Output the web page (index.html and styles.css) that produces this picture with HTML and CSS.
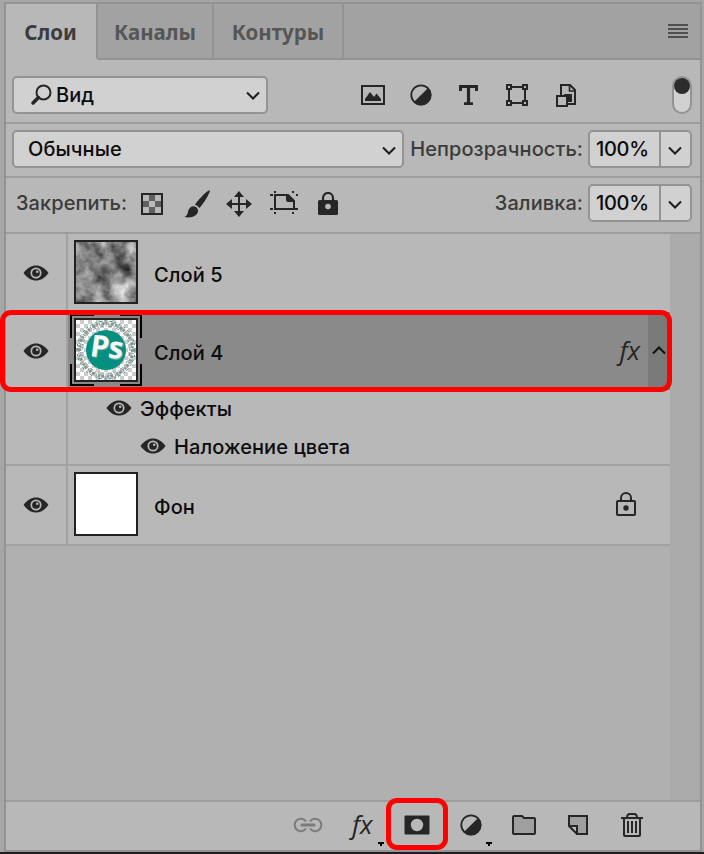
FILE: index.html
```html
<!DOCTYPE html>
<html lang="ru">
<head>
    <meta charset="UTF-8">
    <meta name="viewport" content="width=device-width, initial-scale=1.0">
    <title>Слои</title>
    <link rel="stylesheet" href="styles.css">
</head>
<body>
    <svg class="defs" width="0" height="0">
        <symbol id="eye" viewBox="0 0 26 16">
            <path d="M0.500 8C4 3 8.500 0.500 13 0.500S22 3 25.500 8C22 13 17.500 15.500 13 15.500S4 13 0.500 8Z" fill="#262626"/>
            <circle cx="13" cy="8" r="4.700" fill="none" stroke="#b8b8b8" stroke-width="1.700"/>
            <circle cx="14.200" cy="6.700" r="1.300" fill="#b8b8b8"/>
        </symbol>
        <symbol id="arrow" viewBox="0 0 14 9">
            <path d="M1 1.500l6 6 6-6" fill="none" stroke="#1c1c1c" stroke-width="2"/>
        </symbol>
        <symbol id="contrast" viewBox="0 0 22 22">
            <circle cx="11" cy="11" r="9.700" fill="none" stroke="#262626" stroke-width="1.800"/>
            <path d="M18.300 3.700A10.300 10.300 0 0 1 3.700 18.300Z" fill="#262626"/>
        </symbol>
    </svg>

    <div class="panel">
        <div class="tabs">
            <div class="tab active">Слои</div>
            <div class="tab">Каналы</div>
            <div class="tab">Контуры</div>
            <div class="menu"></div>
        </div>

        <div class="row filter-row">
            <div class="select kind">
                <svg width="22" height="22" viewBox="0 0 22 22" fill="none" stroke="#262626">
                    <circle cx="13.500" cy="8.500" r="7" stroke-width="2"/>
                    <path d="M8.500 13.500L3 19" stroke-width="3.500" stroke-linecap="round"/>
                </svg>
                <span>Вид</span>
                <svg class="arrow" width="14" height="9"><use href="#arrow"/></svg>
            </div>
            <div class="filters">
                <svg width="24" height="20" viewBox="0 0 24 20">
                    <rect x="1" y="1" width="22" height="18" fill="none" stroke="#262626" stroke-width="2"/>
                    <path d="M4 16v-2l5-7 4 5 2.500-3.500L20 14v2Z" fill="#262626"/>
                </svg>
                <svg class="adjust-filter" width="22" height="22"><use href="#contrast"/></svg>
                <svg width="20" height="20" viewBox="0 0 20 20" fill="none" stroke="#262626">
                    <path d="M1.500 6V1.500H17.500V6M5 18.700H14" stroke-width="3"/>
                    <path d="M9.500 1V19" stroke-width="3.200"/>
                </svg>
                <svg width="22" height="22" viewBox="0 0 22 22" fill="none" stroke="#262626" stroke-width="2">
                    <path d="M6 3H16M19 6V16M16 19H6M3 16V6"/>
                    <path d="M1 1h4v4H1zM17 1h4v4h-4zM1 17h4v4H1zM17 17h4v4h-4z"/>
                </svg>
                <svg class="smart-filter" width="20" height="23" viewBox="0 0 20 23" fill="none" stroke="#262626" stroke-width="2">
                    <path d="M5 12V1H14L19 6V20H12"/>
                    <path d="M13.500 1V7H19" stroke-width="1.600"/>
                    <path d="M8 10H16V18H12V12H8Z" fill="#262626" stroke="none"/>
                    <rect x="1" y="12" width="10" height="10"/>
                </svg>
            </div>
            <div class="toggle"></div>
        </div>

        <div class="row">
            <div class="select mode">
                <span>Обычные</span>
                <svg class="arrow" width="14" height="9"><use href="#arrow"/></svg>
            </div>
            <div class="label opacity">Непрозрачность:</div>
            <div class="select percent">
                <span>100%</span>
                <div class="drop"><svg width="14" height="9"><use href="#arrow"/></svg></div>
            </div>
        </div>

        <div class="row lock-row">
            <div class="label lock">Закрепить:</div>
            <div class="locks">
                <svg width="22" height="22" viewBox="0 0 22 22">
                    <rect x="1" y="1" width="20" height="20" fill="#b8b8b8" stroke="#262626" stroke-width="2"/>
                    <path d="M8 2h6v6H8zM2 8h6v6H2zM14 8h6v6h-6zM8 14h6v6H8z" fill="#606060"/>
                </svg>
                <svg class="brush" width="26" height="28" viewBox="0 0 26 28" fill="#262626">
                    <path d="M0.500 27C4 25 3.500 23 4.500 20C6 16 10.500 15 13 18C15.500 21.500 13 25.500 9 26.700C6 27.700 3 27.500 0.500 27Z"/>
                    <path d="M11 14.500C15 9.500 20 3.500 25.200 0.300Q26.200 0.300 25.700 1.800C23.500 7.500 19.500 13.500 15.500 18Q13.500 15.500 11 14.500Z"/>
                </svg>
                <svg class="move" width="26" height="26" viewBox="0 0 26 26">
                    <path d="M13 4V22M4 13H22" stroke="#262626" stroke-width="2"/>
                    <path d="M13 0l5 6H8zM13 26l5-6H8zM0 13l6-5v10zM26 13l-6-5v10z" fill="#262626"/>
                </svg>
                <svg class="artboard" width="28" height="24" viewBox="0 0 28 24">
                    <path d="M5 4H18L24 10V18H5Z" fill="none" stroke="#262626" stroke-width="2"/>
                    <path d="M16 3H18L25 10V11H18Q16 11 16 9Z" fill="#262626"/>
                    <path d="M4 0h2v2H4zM22 0h2v2h-2zM0 3h3v2H0zM26 3h2v2h-2zM0 17h3v2H0zM25 17h3v2h-3zM4 21h2v2H4zM22 21h2v2h-2z" fill="#262626"/>
                </svg>
                <svg class="padlock" width="20" height="24" viewBox="0 0 20 24">
                    <path d="M5 9V6a5 5 0 0 1 10 0V9" fill="none" stroke="#262626" stroke-width="2.200"/>
                    <rect y="8" width="20" height="15" rx="1.500" fill="#262626"/>
                    <circle cx="10" cy="14.500" r="2.800" fill="#b8b8b8"/>
                </svg>
            </div>
            <div class="label">Заливка:</div>
            <div class="select percent">
                <span>100%</span>
                <div class="drop"><svg width="14" height="9"><use href="#arrow"/></svg></div>
            </div>
        </div>

        <div class="content">
            <div class="layers">
                <div class="layer first">
                    <div class="visible"><svg width="26" height="16"><use href="#eye"/></svg></div>
                    <div class="thumb">
                        <svg width="60" height="60">
                            <filter id="clouds" x="0" y="0" width="100%" height="100%" color-interpolation-filters="sRGB">
                                <feTurbulence type="fractalNoise" baseFrequency="0.055" numOctaves="5" seed="21"/>
                                <feColorMatrix values="1.100 0 0 0 -0.020  1.100 0 0 0 -0.020  1.100 0 0 0 -0.020  0 0 0 0 1"/>
                            </filter>
                            <rect width="60" height="60" filter="url(#clouds)"/>
                        </svg>
                    </div>
                    <div class="name">Слой 5</div>
                </div>

                <div class="layer selected">
                    <div class="visible"><svg width="26" height="16"><use href="#eye"/></svg></div>
                    <div class="frame">
                        <svg class="corners" width="72" height="72" viewBox="0 0 72 72">
                            <path d="M1 24V1H24M50 1H71V24M71 50V71H50M24 71H1V50" fill="none" stroke="#000" stroke-width="2"/>
                        </svg>
                        <div class="thumb">
                            <svg width="60" height="60" viewBox="0 0 60 60">
                                <pattern id="checks" width="8" height="8" patternUnits="userSpaceOnUse">
                                    <path d="M0 0h8v8H0z" fill="#fff"/>
                                    <path d="M4 0h4v4H4zM0 4h4v4H0z" fill="#ccc"/>
                                </pattern>
                                <rect width="60" height="60" fill="url(#checks)"/>
                                <g fill="none">
                                    <circle cx="30" cy="30" r="26.500" stroke="#8d9190" stroke-width="3" stroke-dasharray="2 1 1 1.500 3 1"/>
                                    <circle cx="30" cy="30" r="29" stroke="#138f80" stroke-dasharray="3 2 2 3"/>
                                    <circle cx="30" cy="30" r="24" stroke="#579b92" stroke-dasharray="1 2 3 2"/>
                                </g>
                                <circle cx="30" cy="30" r="20" fill="#048f7f"/>
                                <g transform="rotate(5 30 30) skewX(-3)">
                                    <text class="ps shade" x="16.500" y="38.500">Ps</text>
                                    <text class="ps" x="15.500" y="37.500">Ps</text>
                                </g>
                            </svg>
                        </div>
                    </div>
                    <div class="name">Слой 4</div>
                    <div class="fx">fx</div>
                    <div class="collapse">
                        <svg width="14" height="9" viewBox="0 0 14 9"><path d="M1 7.500l6-6 6 6" fill="none" stroke="#111" stroke-width="2"/></svg>
                    </div>
                </div>

                <div class="layer effects">
                    <div class="visible"></div>
                    <div class="effect-list">
                        <div class="effect"><svg width="26" height="16"><use href="#eye"/></svg><span>Эффекты</span></div>
                        <div class="effect child"><svg width="26" height="16"><use href="#eye"/></svg><span>Наложение цвета</span></div>
                    </div>
                </div>

                <div class="layer background">
                    <div class="visible"><svg width="26" height="16"><use href="#eye"/></svg></div>
                    <div class="thumb"></div>
                    <div class="name">Фон</div>
                    <svg class="locked" width="20" height="24" viewBox="0 0 20 24">
                        <path d="M5 9V6a5 5 0 0 1 10 0V9" fill="none" stroke="#262626" stroke-width="2"/>
                        <rect x="1" y="9" width="18" height="14" rx="1" fill="none" stroke="#262626" stroke-width="2"/>
                        <circle cx="10" cy="16" r="2.700" fill="#262626"/>
                    </svg>
                </div>
            </div>
            <div class="scroll"></div>
        </div>

        <div class="footer">
            <svg class="link" width="30" height="16" viewBox="0 0 30 16" fill="none" stroke="#7b7b7b" stroke-width="2">
                <path d="M13 4.500A6.200 6.200 0 1 0 13 11.500M17 4.500A6.200 6.200 0 1 1 17 11.500"/>
                <path d="M9 8H21" stroke-width="3" stroke-linecap="round"/>
            </svg>
            <div class="fx footer-fx">fx</div>
            <svg class="mini" width="6" height="4"><path d="M0 0h6v2H4v2H2V2H0z"/></svg>
            <svg class="mask" width="26" height="20" viewBox="0 0 26 20">
                <rect x="0.500" y="0.500" width="25" height="19" rx="1" fill="#262626"/>
                <circle cx="13" cy="10" r="6.200" fill="#b8b8b8"/>
            </svg>
            <svg class="adjust" width="22" height="22"><use href="#contrast"/></svg>
            <svg class="mini" width="6" height="4"><path d="M0 0h6v2H4v2H2V2H0z"/></svg>
            <svg class="folder" width="24" height="20" viewBox="0 0 24 20">
                <path d="M1 18V2Q1 1 2 1H10L12 3H22Q23 3 23 4V18Q23 19 22 19H2Q1 19 1 18Z" fill="#9f9f9f" stroke="#262626" stroke-width="2"/>
            </svg>
            <svg class="new" width="20" height="20" viewBox="0 0 20 20">
                <path d="M1 11V1H19V19H9Z" fill="#9f9f9f"/>
                <path d="M1 12L8 19V12Z" fill="#b8b8b8"/>
                <path d="M1 11V1H19V19H9V11H1L9 19" fill="none" stroke="#262626" stroke-width="2"/>
            </svg>
            <svg width="22" height="24" viewBox="0 0 22 24" fill="none" stroke="#262626" stroke-width="2">
                <path d="M0 5H22M6 5Q6 1 9 1H13Q16 1 16 5M3 5V22Q3 23 4 23H18Q19 23 19 22V5M7 8V20M11 8V20M15 8V20"/>
            </svg>
        </div>
    </div>

    <div class="highlight highlight-layer"></div>
    <div class="highlight highlight-mask"></div>
</body>
</html>
```
FILE: styles.css
```css
* {
    box-sizing: border-box;
}

body {
    margin: 0;
    padding: 2px 2px 2px 4px;
    width: 704px;
    height: 854px;
    position: relative;
    overflow: hidden;
    background: linear-gradient(#a6a6a6 852px, #221c20 852px);
    font-family: Inter, "Liberation Sans", sans-serif;
    font-size: 20px;
    font-weight: 450;
    letter-spacing: 0.08px;
    color: #0c0c0c;
}

svg {
    display: block;
    flex-shrink: 0;
}

.defs {
    position: absolute;
}

.panel {
    height: 850px;
    border: 2px solid #939393;
    background: #b8b8b8;
    display: flex;
    flex-direction: column;
}

/* tabs */
.tabs {
    display: flex;
    height: 56px;
    background: #a2a2a2;
}

.tab {
    display: flex;
    align-items: center;
    justify-content: center;
    width: 130px;
    padding-top: 1px;
    border-right: 2px solid #939393;
    border-bottom: 2px solid #939393;
    color: #565656;
    font-family: "Noto Sans", sans-serif;
    font-size: 20.5px;
    font-weight: bold;
    letter-spacing: 0;
}

.tab:nth-child(2) {
    width: 116px;
}

.tab.active {
    width: 92px;
    padding-right: 1px;
    background: #b8b8b8;
    border-bottom-color: #b8b8b8;
    color: #3c3c3c;
}

.menu {
    flex: 1;
    border-bottom: 2px solid #939393;
}

.menu::after {
    content: "";
    display: block;
    width: 20px;
    height: 14px;
    margin: 20px 12px 0 auto;
    background: repeating-linear-gradient(#505050 0 2px, #a2a2a2 2px 4px);
}

/* option rows */
.row {
    display: flex;
    align-items: center;
    height: 54px;
    padding: 0 8px 2px 6px;
    border-bottom: 2px solid #9c9c9c;
}

.filter-row {
    height: 64px;
    padding-top: 8px;
    padding-bottom: 0;
}

.lock-row {
    height: 56px;
    padding-bottom: 4px;
}

.select {
    display: flex;
    align-items: center;
    height: 38px;
    border: 2px solid #939393;
    border-radius: 5px;
    background: #d1d1d1;
}

.kind {
    width: 256px;
    padding: 0 6px 0 16px;
}

.kind span {
    margin-left: 4px;
}

.mode {
    width: 392px;
    padding: 0 6px 0 14px;
}

.arrow {
    margin-left: auto;
}

.mode .arrow,
.drop svg {
    margin-top: 2px;
}

.filters {
    display: flex;
    align-items: center;
    margin-left: 93px;
    gap: 27px;
}

.adjust-filter {
    margin-left: -2px;
}

.smart-filter {
    margin-left: 1px;
}

.toggle {
    width: 20px;
    height: 38px;
    margin-left: auto;
    border: 2px solid #939393;
    border-radius: 10px;
    background: #d1d1d1;
}

.toggle::before {
    content: "";
    display: block;
    width: 16px;
    height: 16px;
    border-radius: 50%;
    background: #2c2c2c;
}

.label {
    margin-left: auto;
    margin-right: 5px;
    color: #3b3b3b;
    white-space: nowrap;
}

.label.lock {
    margin: 0 0 0 4px;
    width: 125px;
}

.percent {
    width: 104px;
}

.percent span {
    width: 70px;
    padding-left: 6px;
    letter-spacing: -0.3px;
}

.drop {
    display: flex;
    align-items: center;
    justify-content: center;
    width: 32px;
    height: 34px;
    border-left: 2px solid #939393;
}

.locks {
    display: flex;
    align-items: center;
    gap: 18px;
    padding-top: 2px;
}

.brush {
    margin-left: 3px;
}

.move {
    margin-left: -2px;
}

.artboard {
    margin-top: -2px;
}

.padlock {
    margin-left: 2px;
}

/* layers list */
.content {
    display: flex;
    flex: 1;
    background: #b0b0b0;
}

.layers {
    width: 664px;
}

.scroll {
    width: 30px;
    background: #ababab;
}

.layer {
    display: flex;
    align-items: center;
    height: 78px;
    padding-bottom: 2px;
    background: #b8b8b8;
}

.visible {
    display: flex;
    align-items: center;
    justify-content: center;
    align-self: stretch;
    width: 62px;
    margin-bottom: -2px;
    padding-bottom: 1px;
    border-right: 2px solid #a2a2a2;
    background: #b8b8b8;
}

.thumb {
    width: 64px;
    height: 64px;
    margin-left: 6px;
    border: 2px solid #222;
    background: #fff;
}

.name {
    margin: 5px 0 0 16px;
}

.selected {
    background: #8a8a8a;
}

.frame {
    position: relative;
}

.corners {
    position: absolute;
    left: 2px;
    top: -4px;
}

.ps {
    font-family: "Open Sans", sans-serif;
    font-size: 30px;
    font-weight: bold;
    letter-spacing: -0.5px;
    fill: #f5f5f5;
}

.ps.shade {
    fill: #6fa69f;
}

.fx {
    margin-left: auto;
    color: #262626;
    font-family: "Open Sans", sans-serif;
    font-size: 26px;
    font-style: italic;
    font-weight: normal;
    letter-spacing: 0;
}

.collapse {
    display: flex;
    align-items: center;
    justify-content: center;
    align-self: stretch;
    width: 22px;
    margin: 0 0 -2px 8px;
    padding-bottom: 2px;
    background: #7a7a7a;
}

.effects {
    height: 76px;
    padding-bottom: 0;
    border-bottom: 2px solid #a2a2a2;
}

.effects .visible {
    margin-bottom: 0;
}

.effect-list {
    padding-left: 38px;
}

.effect {
    display: flex;
    align-items: center;
    gap: 8px;
    height: 38px;
}

.effect span {
    padding-top: 2px;
}

.effect.child {
    padding-left: 34px;
}

.background {
    height: 80px;
    border-bottom: 2px solid #a2a2a2;
}

.locked {
    margin-left: auto;
    margin-right: 34px;
}

/* bottom bar */
.footer {
    display: flex;
    align-items: center;
    height: 50px;
    padding: 0 0 2px 287px;
    border-top: 2px solid #9c9c9c;
}

.footer-fx {
    margin: 0 0 2px 29px;
    width: 23px;
}

.mini {
    align-self: flex-end;
    margin: 0 0 2px 3px;
}

.mask {
    margin-left: 20px;
}

.adjust {
    margin-left: 30px;
}

.mask + .adjust + .mini {
    margin-left: 4px;
}

.folder {
    margin-left: 20px;
}

.new {
    margin: 0 33px 0 32px;
}

/* red frames over the panel */
.highlight {
    position: absolute;
    border: 5px solid #f00;
    border-radius: 11px;
}

.highlight-layer {
    left: 0;
    top: 310px;
    width: 672px;
    height: 82px;
}

.highlight-mask {
    left: 386px;
    top: 798px;
    width: 62px;
    height: 52px;
}
```
